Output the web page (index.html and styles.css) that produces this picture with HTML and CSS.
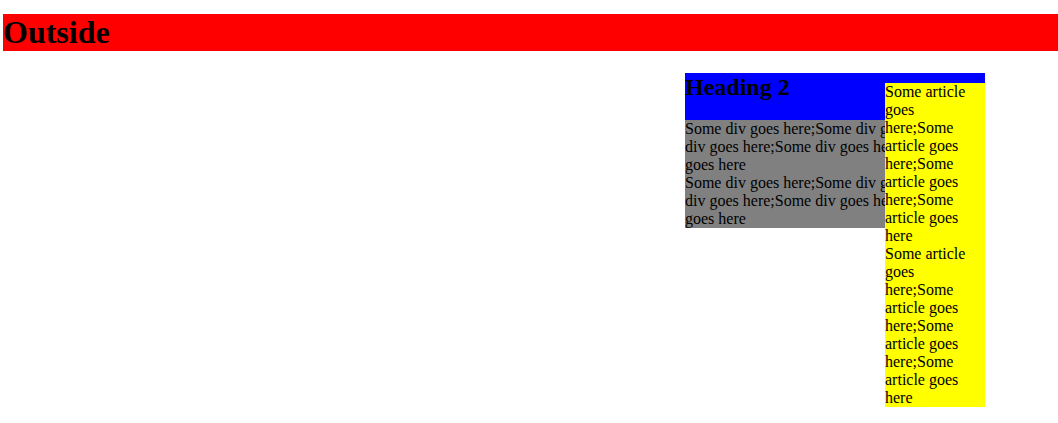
FILE: index.html
```html
<!DOCTYPE html>
<html>
<head>
<meta charset="utf-8">
<title>Outside</title>
<link rel="stylesheet" href="styles.css">
</head>
<body>
<h1 class="outside">Outside</h1>
<section class="box">
  <header class="box-head">
    <h2 class="box-title">Heading 2</h2>
  </header>
  <div class="box-body">
    <div class="box-text">Some div goes here;Some div goes here;Some div goes here;Some div goes here;Some div goes here</div>
    <div class="box-text">Some div goes here;Some div goes here;Some div goes here;Some div goes here;Some div goes here</div>
  </div>
  <article class="aside">
    <div class="aside-text">Some article goes here;Some article goes here;Some article goes here;Some article goes here</div>
    <div class="aside-text">Some article goes here;Some article goes here;Some article goes here;Some article goes here</div>
  </article>
</section>
</body>
</html>
```
FILE: styles.css
```css
html, body {
  margin: 0;
  padding: 0;
  background: #fff;
  font-family: "Liberation Serif", "Times New Roman", serif;
  font-size: 16px;
  color: #000;
}
.outside {
  margin: 14px 0 22px 3px;
  background: #ff0000;
  font-size: 32px;
  font-weight: bold;
  line-height: 37px;
}
.box {
  display: grid;
  grid-template-columns: 200px 100px;
  grid-template-rows: auto 1fr;
  margin-left: 685px;
  width: 300px;
}
.box-head {
  grid-column: 1 / 3;
  grid-row: 1;
  background: #0000ff;
  display: flow-root;
}
.box-title {
  margin: 0 0 19px 0;
  font-size: 24px;
  line-height: 28px;
  font-weight: bold;
}
.box-body {
  grid-column: 1;
  grid-row: 2;
  align-self: start;
  width: 200px;
  background: #808080;
  line-height: 18px;
}
.box-text {
  width: 300px;
}
.aside {
  grid-column: 2;
  grid-row: 1 / 3;
  align-self: start;
  margin-top: 10px;
  position: relative;
  z-index: 1;
  background: #ffff00;
  line-height: 18px;
}
.aside-text {
  margin: 0;
}
```
